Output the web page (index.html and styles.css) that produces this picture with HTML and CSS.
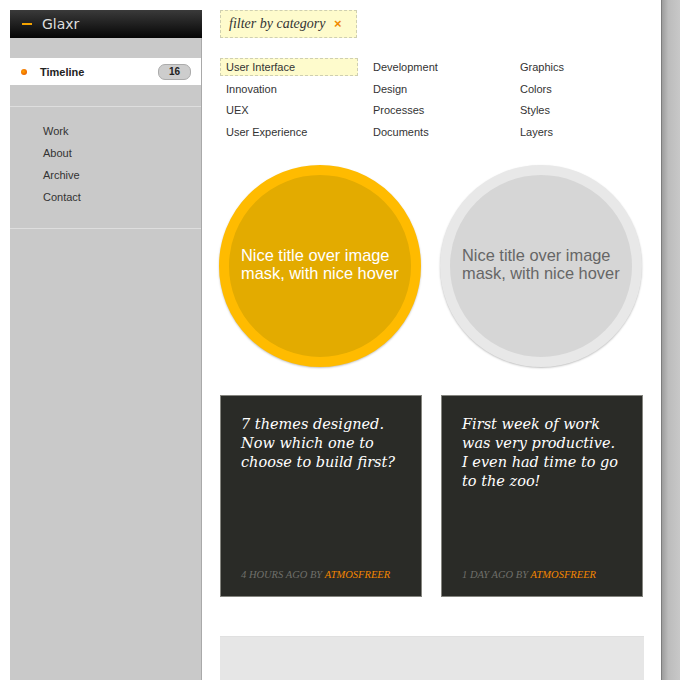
FILE: index.html
```html
<!DOCTYPE html>
<html lang="en">
<head>
  <meta charset="UTF-8" />
  <meta name="viewport" content="width=device-width, initial-scale=1.0"/>
  <title>Glaxr</title>
  <link rel="stylesheet" href="styles.css">
</head>
<body>
  <div class="page">

    <!-- Sidebar -->
    <div class="sidebar">
      <div class="brand"><span class="dash"></span>Glaxr</div>
      <div class="timeline">
        <span class="dot"></span>
        <span class="timeline-label">Timeline</span>
        <span class="badge">16</span>
      </div>
      <ul class="nav">
        <li>Work</li>
        <li>About</li>
        <li>Archive</li>
        <li>Contact</li>
      </ul>
    </div>

    <!-- Main -->
    <div class="main">
      <div class="filter">filter by category <span class="close">×</span></div>

      <div class="categories">
        <span class="cat active">User Interface</span>
        <span class="cat">Development</span>
        <span class="cat">Graphics</span>
        <span class="cat">Innovation</span>
        <span class="cat">Design</span>
        <span class="cat">Colors</span>
        <span class="cat">UEX</span>
        <span class="cat">Processes</span>
        <span class="cat">Styles</span>
        <span class="cat">User Experience</span>
        <span class="cat">Documents</span>
        <span class="cat">Layers</span>
      </div>

      <div class="tiles">
        <div class="circle yellow">
          <p>Nice title over image mask, with nice hover</p>
        </div>
        <div class="circle grey">
          <p>Nice title over image mask, with nice hover</p>
        </div>

        <div class="note">
          <p class="note-text">7 themes designed. Now which one to choose to build first?</p>
          <p class="meta">4 hours ago by <span class="author">atmosfreer</span></p>
        </div>
        <div class="note">
          <p class="note-text">First week of work was very productive. I even had time to go to the zoo!</p>
          <p class="meta">1 day ago by <span class="author">atmosfreer</span></p>
        </div>
      </div>

      <div class="panel"></div>
    </div>

    <div class="edge"></div>
  </div>
</body>
</html>
```

FILE: styles.css
```css
body {
  margin: 0;
  background: #fff;
  font-family: 'Liberation Sans', Arial, sans-serif;
  color: #333;
  overflow: hidden;
}

.page {
  display: flex;
  height: 680px;
}

/* Sidebar */
.sidebar {
  margin: 10px 0 0 10px;
  width: 191px;
  background: #c9c9c9;
  border-right: 1px solid #a9a9a9;
}

.brand {
  height: 28px;
  display: flex;
  align-items: center;
  background: linear-gradient(#3a3a3a, #050505);
  color: #dedede;
  font-family: 'DejaVu Sans', sans-serif;
  font-size: 14px;
  margin-right: -1px;
}

.dash {
  width: 10px;
  height: 2px;
  background: #f5a300;
  margin: 0 10px 0 12px;
}

.timeline {
  margin: 20px 0 21px -10px;
  height: 27px;
  background: #fff;
  display: flex;
  align-items: center;
  font-size: 11px;
  font-weight: bold;
  color: #222;
}

.dot {
  width: 6px;
  height: 6px;
  border-radius: 50%;
  background: radial-gradient(circle at 40% 40%, #ffa200, #e24b00);
  margin: 0 13px 0 21px;
}

.timeline-label {
  flex: 1;
}

.badge {
  width: 31px;
  height: 14px;
  line-height: 14px;
  text-align: center;
  border: 1px solid #ababab;
  border-radius: 7px;
  background: #cdcdcd;
  font-size: 10px;
  margin-right: 10px;
}

.nav {
  list-style: none;
  margin: 0;
  padding: 13px 0 20px 33px;
  border-top: 1px solid #dedede;
  border-bottom: 1px solid #dedede;
  font-size: 11px;
  line-height: 22px;
  color: #333;
}

/* Main */
.main {
  width: 423px;
  padding: 10px 18px 0 18px;
  background: #fff;
}

.filter {
  width: 127px;
  height: 26px;
  line-height: 26px;
  padding-left: 8px;
  background: #fefbcc;
  border: 1px dashed #cfcfb0;
  font-family: 'Liberation Serif', Georgia, serif;
  font-style: italic;
  font-size: 14px;
  color: #333;
}

.close {
  color: #f08a00;
  font-family: 'Liberation Sans', sans-serif;
  font-style: normal;
  font-weight: bold;
  font-size: 13px;
  margin-left: 5px;
}

.categories {
  display: grid;
  grid-template-columns: 147px 147px 129px;
  row-gap: 3.6px;
  margin-top: 20px;
  font-size: 11px;
}

.cat {
  width: 131px;
  height: 16px;
  line-height: 16px;
  padding-left: 5px;
  border: 1px solid transparent;
}

.cat.active {
  background: #fefbcc;
  border: 1px dashed #cfcfb0;
}

.tiles {
  display: grid;
  grid-template-columns: 202px 202px;
  column-gap: 19px;
  row-gap: 28px;
  margin-top: 24px;
}

.circle {
  width: 182px;
  height: 182px;
  border-radius: 50%;
  border: 10px solid;
  display: flex;
  align-items: center;
  box-shadow: 0 1px 2px rgba(0, 0, 0, 0.25);
  margin-left: -1px;
}

.circle p {
  margin: -4px 0 0 12px;
  font-size: 16.4px;
  line-height: 18px;
}

.circle.yellow {
  background: #e3ab00;
  border-color: #ffbb00;
  color: #fff;
}

.circle.grey {
  background: #d6d6d6;
  border-color: #e8e8e8;
  color: #666;
}

.note {
  height: 200px;
  background: #2a2b27;
  border: 1px solid #85857f;
  display: flex;
  flex-direction: column;
  justify-content: space-between;
  padding: 0 20px;
  font-family: 'DejaVu Serif', Georgia, serif;
  font-style: italic;
}

.note-text {
  width: 162px;
  margin: 19px 0 0;
  color: #fff;
  font-size: 14.5px;
  line-height: 19px;
}

.meta {
  margin: 0 0 16px;
  text-transform: uppercase;
  font-family: 'Liberation Serif', Georgia, serif;
  font-size: 10.5px;
  color: #6f6f6a;
}

.author {
  color: #f28500;
}

.panel {
  margin-top: 39px;
  height: 60px;
  background: #e6e6e6;
  border-top: 1px solid #e0e0e0;
  width: 424px;
}

.edge {
  flex: 1;
  border-left: 1px solid #7d7d7d;
  background: linear-gradient(to right, #9d9d9d, #bcbcbc 35%, #c8c8c8);
}
```
